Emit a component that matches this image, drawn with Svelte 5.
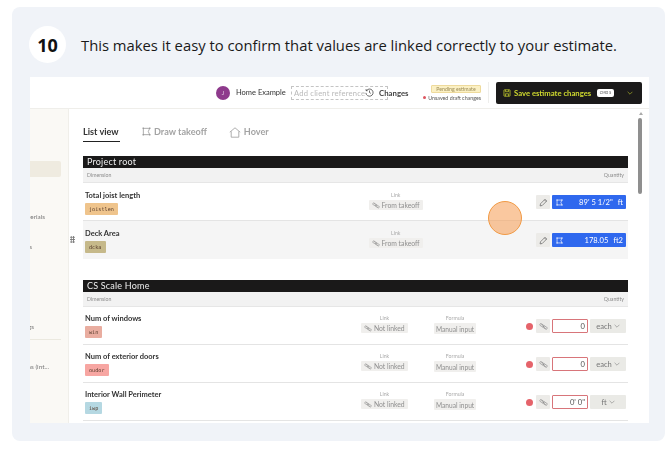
<script>
  const sideItems = [
    { text: 'Materials', cls: 'si1' },
    { text: 'Items', cls: 'si2' },
    { text: 'Settings', cls: 'si3' },
    { text: 'Extras (int...', cls: 'si4' }
  ];
  const rootRows = [
    { name: 'Total joist length', tag: 'joistlen', color: '#efc48c', value: '89\' 5 1/2"', unit: 'ft' },
    { name: 'Deck Area', tag: 'dcka', color: '#c6b98a', value: '178.05', unit: 'ft2', alt: true }
  ];
  const homeRows = [
    { name: 'Num of windows', tag: 'win', color: '#e9ada0', value: '0', unit: 'each' },
    { name: 'Num of exterior doors', tag: 'oudor', color: '#f7a6a2', value: '0', unit: 'each' },
    { name: 'Interior Wall Perimeter', tag: 'iwp', color: '#b5d8e2', value: '0\' 0"', unit: 'ft' }
  ];
</script>

{#snippet takeoffIcon(color)}
  <svg class="ico" viewBox="0 0 10 10" fill="none" stroke={color} stroke-width="0.9">
    <path d="M1.5 1.5h7L7 5l1.5 3.5h-7z" />
    <rect x="0.6" y="0.6" width="1.6" height="1.6" fill={color} stroke="none" />
    <rect x="7.8" y="0.6" width="1.6" height="1.6" fill={color} stroke="none" />
    <rect x="0.6" y="7.8" width="1.6" height="1.6" fill={color} stroke="none" />
    <rect x="7.8" y="7.8" width="1.6" height="1.6" fill={color} stroke="none" />
  </svg>
{/snippet}

{#snippet linkOff()}
  <svg class="ico" viewBox="0 0 12 10" fill="none" stroke="#8a8a8a" stroke-width="0.8">
    <rect x="0.8" y="2" width="6" height="2.8" rx="1.4" transform="rotate(30 3.8 3.4)" />
    <rect x="5.2" y="5" width="6" height="2.8" rx="1.4" transform="rotate(30 8.2 6.4)" />
    <path d="M3 1.4l6 7" />
  </svg>
{/snippet}

<div class="card">
  <header class="head">
    <div class="num">10</div>
    <p class="title">This makes it easy to confirm that values are linked correctly to your estimate.</p>
  </header>

  <div class="shot">
    <div class="topbar">
      <span class="avatar">J</span>
      <span class="project">Home Example</span>
      <span class="ref">Add client reference</span>
      <span class="changes">
        <svg class="clock" viewBox="0 0 10 10" fill="none" stroke="#333" stroke-width="0.8">
          <path d="M1.6 3A4 4 0 1 1 1 5.4M1.2 1.2V3h1.8M5 2.8V5l1.5 1" />
        </svg>
        Changes
      </span>
      <div class="status">
        <span class="pending">Pending estimate</span>
        <span class="unsaved"><i></i>Unsaved draft changes</span>
      </div>
      <span class="divider"></span>
      <div class="save">
        <svg class="saveicon" viewBox="0 0 10 10" fill="none" stroke="#cfd92f" stroke-width="0.9">
          <rect x="1.2" y="1" width="7.6" height="8" rx="0.6" />
          <path d="M3 1v2.4h4V1M3 9V6h4v3" />
        </svg>
        <span class="savetext">Save estimate changes</span>
        <span class="kbd">CMD S</span>
        <svg class="chev" viewBox="0 0 10 6" fill="none" stroke="#cfd92f" stroke-width="0.9">
          <path d="M1 1l4 4 4-4" />
        </svg>
      </div>
    </div>

    <div class="body">
      <aside class="side">
        <div class="hl"></div>
        {#each sideItems as s, i}
          {#if i === 3}<div class="rule"></div>{/if}
          <div class="sitem {s.cls}"><span>{s.text}</span></div>
        {/each}
      </aside>

      <main class="main">
        <nav class="tabs">
          <span class="tab active">List view</span>
          <span class="tab">
            {@render takeoffIcon('#9a9a9a')}
            Draw takeoff
          </span>
          <span class="tab">
            <svg class="ico home" viewBox="0 0 12 11" fill="none" stroke="#9a9a9a" stroke-width="0.8">
              <path d="M0.8 5.2L6 0.8l5.2 4.4M2.2 4.4v5.8h7.6V4.4" />
            </svg>
            Hover
          </span>
        </nav>

        <section class="sec">
          <h2 class="sechead">Project root</h2>
          <div class="dimrow"><span>Dimension</span><span>Quantity</span></div>
          {#each rootRows as r}
            <div class="row root" class:alt={r.alt}>
              <div class="namecol">
                <div class="name">{r.name}</div>
                <span class="tag" style="background:{r.color}">{r.tag}</span>
              </div>
              <div class="col">
                <span class="lbl">Link</span>
                <span class="chip">{@render linkOff()}From takeoff</span>
              </div>
              <div class="right">
                <span class="iconbtn">
                  <svg class="ico" viewBox="0 0 10 10" fill="none" stroke="#666" stroke-width="0.8">
                    <path d="M1.2 8.8l.5-2.4 5-5 1.9 1.9-5 5zM6 2.1l1.9 1.9" />
                  </svg>
                </span>
                <span class="blue">
                  {@render takeoffIcon('#fff')}
                  <span class="val">{r.value}</span>
                  <span class="unit">{r.unit}</span>
                </span>
              </div>
            </div>
          {/each}
        </section>

        <section class="sec second">
          <h2 class="sechead">CS Scale Home</h2>
          <div class="dimrow"><span>Dimension</span><span>Quantity</span></div>
          {#each homeRows as r}
            <div class="row home-row">
              <div class="namecol">
                <div class="name">{r.name}</div>
                <span class="tag" style="background:{r.color}">{r.tag}</span>
              </div>
              <div class="col">
                <span class="lbl">Link</span>
                <span class="chip">{@render linkOff()}Not linked</span>
              </div>
              <div class="col">
                <span class="lbl">Formula</span>
                <span class="chip tall">Manual input</span>
              </div>
              <div class="right">
                <i class="dot"></i>
                <span class="iconbtn">{@render linkOff()}</span>
                <span class="input">{r.value}</span>
                <span class="select">
                  {r.unit}
                  <svg class="minichev" viewBox="0 0 10 6" fill="none" stroke="#777" stroke-width="0.9">
                    <path d="M1 1l4 4 4-4" />
                  </svg>
                </span>
              </div>
            </div>
          {/each}
        </section>
      </main>

      <div class="track"><span class="arrow"></span><span class="thumb"></span></div>
    </div>

    <div class="grip"></div>
    <div class="pulse"></div>
  </div>
</div>

<style>
  :global(body) {
    margin: 0;
    background: #fff;
  }
  .card {
    width: 653px;
    height: 434px;
    margin: 7px 0 0 12px;
    padding: 19px 16px 18px 18px;
    box-sizing: border-box;
    background: #f0f3f8;
    border-radius: 8px;
    display: flex;
    flex-direction: column;
    font-family: "Open Sans", sans-serif;
  }
  .head {
    display: flex;
    align-items: center;
    gap: 15px;
    height: 37px;
    margin: 0 0 14px -1px;
  }
  .num {
    width: 37px;
    height: 37px;
    flex: none;
    border-radius: 50%;
    background: #fff;
    display: flex;
    align-items: center;
    justify-content: center;
    font-size: 18px;
    font-weight: 700;
    color: #111;
  }
  .title {
    margin: 1px 0 0;
    font-size: 14.8px;
    color: #1a1a1a;
    white-space: nowrap;
  }
  .shot {
    position: relative;
    width: 619px;
    height: 346px;
    background: #fff;
    overflow: hidden;
    display: flex;
    flex-direction: column;
    font-family: Lato, sans-serif;
    filter: blur(0.35px);
  }
  .topbar {
    height: 32px;
    flex: none;
    box-sizing: border-box;
    border-bottom: 1px solid #efeeea;
    display: flex;
    align-items: center;
    padding: 0 7px 0 186px;
    font-size: 7.5px;
    color: #333;
  }
  .avatar {
    width: 14px;
    height: 14px;
    flex: none;
    border-radius: 50%;
    background: #8e3a8c;
    color: #e8cfe6;
    font-size: 5.5px;
    display: flex;
    align-items: center;
    justify-content: center;
    margin-right: 6px;
  }
  .project {
    width: 55px;
    flex: none;
    white-space: nowrap;
  }
  .ref {
    width: 97px;
    height: 14px;
    flex: none;
    box-sizing: border-box;
    border: 1px dashed #c4c4c4;
    color: #b9b9b9;
    padding-left: 2px;
    line-height: 12px;
    font-size: 7.6px;
    letter-spacing: 0.2px;
    white-space: nowrap;
  }
  .changes {
    display: flex;
    align-items: center;
    gap: 5px;
    margin-left: -23px;
    width: 59px;
    flex: none;
    font-weight: 700;
    color: #444;
    font-size: 7.8px;
  }
  .clock {
    width: 9px;
    height: 9px;
  }
  .status {
    width: 57px;
    flex: none;
    display: flex;
    flex-direction: column;
    align-items: flex-end;
    gap: 2px;
    font-size: 5.3px;
  }
  .pending {
    width: 50px;
    height: 8px;
    box-sizing: border-box;
    background: #fbf0c4;
    border: 1px solid #eeda9c;
    border-radius: 1px;
    color: #9a8a55;
    text-align: center;
    line-height: 6px;
    font-size: 5.2px;
    white-space: nowrap;
  }
  .unsaved {
    display: flex;
    align-items: center;
    gap: 2px;
    color: #555;
    white-space: nowrap;
  }
  .unsaved i {
    width: 3px;
    height: 3px;
    border-radius: 50%;
    background: #dd5560;
  }
  .divider {
    width: 1px;
    height: 21px;
    background: #eeeeec;
    margin: 0 7px;
    flex: none;
  }
  .save {
    width: 146px;
    height: 22px;
    flex: none;
    box-sizing: border-box;
    background: #1b1a1a;
    border-radius: 2px;
    display: flex;
    align-items: center;
    padding: 0 8px 0 7px;
    color: #cfd92f;
  }
  .saveicon {
    width: 8px;
    height: 8px;
    margin-right: 3px;
  }
  .savetext {
    width: 83px;
    flex: none;
    font-size: 7.7px;
    font-weight: 700;
    white-space: nowrap;
  }
  .kbd {
    width: 17px;
    height: 8px;
    background: #fff;
    border-radius: 2px;
    color: #444;
    font-size: 3.6px;
    line-height: 8px;
    text-align: center;
    white-space: nowrap;
  }
  .chev {
    width: 6px;
    height: 4px;
    margin-left: auto;
    margin-right: 1px;
  }
  .body {
    flex: 1;
    min-height: 0;
    display: flex;
  }
  .side {
    width: 39px;
    flex: none;
    box-sizing: border-box;
    background: #faf9f5;
    border-right: 1px solid #f0efea;
    font-size: 6.4px;
    color: #777;
    padding-top: 52px;
  }
  .hl {
    width: 31px;
    height: 16px;
    background: #efebe0;
    border-radius: 0 2px 2px 0;
  }
  .sitem {
    display: flex;
    justify-content: flex-end;
    overflow: hidden;
    white-space: nowrap;
    height: 9px;
    line-height: 9px;
  }
  .si1 { margin-top: 35px; width: 15px; }
  .si2 { margin-top: 21px; width: 2px; }
  .si3 { margin-top: 71px; width: 4px; }
  .si4 { margin-top: 22px; width: 19px; }
  .rule {
    width: 31px;
    height: 1px;
    background: #ebe9df;
    margin-top: 8px;
  }
  .main {
    flex: 1;
    min-width: 0;
    padding-left: 14px;
  }
  .tabs {
    display: flex;
    gap: 22px;
    height: 33px;
    box-sizing: border-box;
    padding-top: 17px;
    font-size: 9.1px;
    font-weight: 700;
    color: #a3a3a3;
  }
  .tab {
    display: flex;
    align-items: flex-start;
    gap: 3px;
    height: 15px;
    line-height: 11px;
    white-space: nowrap;
  }
  .tab .ico {
    width: 9px;
    height: 9px;
    margin-top: 1px;
  }
  .tab .home {
    width: 12px;
    height: 11px;
  }
  .tab.active {
    color: #333;
    width: 37px;
    border-bottom: 1px solid #222;
    height: 15px;
    box-sizing: content-box;
  }
  .sec {
    width: 545px;
    margin-top: 14px;
  }
  .sec.second {
    margin-top: 21px;
  }
  .sechead {
    margin: 0;
    height: 12px;
    background: #1a1919;
    color: #eee;
    font-size: 9px;
    font-weight: 400;
    line-height: 12px;
    padding-left: 4px;
    letter-spacing: 0.2px;
  }
  .dimrow {
    height: 15px;
    box-sizing: border-box;
    background: #f2f2f2;
    border-bottom: 1px solid #e6e6e6;
    display: flex;
    justify-content: space-between;
    align-items: center;
    padding: 0 4px;
    font-size: 5.2px;
    color: #8c8c8c;
  }
  .row {
    height: 38px;
    box-sizing: border-box;
    border-bottom: 1px solid #e4e4e4;
    display: grid;
    align-items: start;
    padding: 7px 2px 0;
  }
  .row.root {
    grid-template-columns: 284px 52px 1fr;
    padding-top: 8px;
  }
  .row.root .right {
    margin-top: 4px;
  }
  .row.root.alt {
    background: #f5f5f5;
    border-bottom: none;
  }
  .row.home-row {
    grid-template-columns: 277px 72px 42px 1fr;
  }
  .namecol {
    display: flex;
    flex-direction: column;
    align-items: flex-start;
    gap: 2px;
  }
  .name {
    font-size: 7.5px;
    font-weight: 700;
    color: #333;
    line-height: 10px;
    white-space: nowrap;
  }
  .tag {
    height: 12px;
    padding: 0 4px;
    border-radius: 1px;
    font-family: "DejaVu Sans Mono", monospace;
    font-size: 5.2px;
    line-height: 12px;
    color: #553a2a;
  }
  .col {
    display: flex;
    flex-direction: column;
    align-items: center;
    width: fit-content;
    min-width: 42px;
    gap: 1px;
    padding-top: 1px;
  }
  .row.home-row .col:nth-child(2) {
    width: 45px;
  }
  .lbl {
    font-size: 5.2px;
    line-height: 7px;
    color: #aaa;
  }
  .chip {
    display: flex;
    align-items: center;
    justify-content: center;
    gap: 1.5px;
    height: 10px;
    padding: 0 3px;
    background: #f0efed;
    border-radius: 1px;
    font-size: 6.8px;
    color: #8f8f8f;
    white-space: nowrap;
  }
  .chip.tall {
    height: 11px;
    font-size: 6.6px;
    padding: 0 2px;
  }
  .chip .ico {
    width: 8px;
    height: 7px;
  }
  .right {
    justify-self: end;
    display: flex;
    align-items: center;
    gap: 2px;
    margin-top: 5px;
    height: 14px;
  }
  .iconbtn {
    width: 14px;
    height: 14px;
    background: #ecebe8;
    border-radius: 1px;
    display: flex;
    align-items: center;
    justify-content: center;
  }
  .iconbtn .ico {
    width: 9px;
    height: 9px;
  }
  .blue {
    width: 74px;
    height: 14px;
    box-sizing: border-box;
    background: #2f68ee;
    border-radius: 1px;
    display: flex;
    align-items: center;
    padding: 0 3px;
    color: #fff;
    font-size: 7.6px;
  }
  .blue .ico {
    width: 7px;
    height: 7px;
    margin-left: 1px;
  }
  .val {
    margin-left: auto;
    white-space: nowrap;
  }
  .unit {
    margin-left: 5px;
  }
  .dot {
    width: 7px;
    height: 7px;
    border-radius: 50%;
    background: #e5636a;
    margin-right: 1.5px;
  }
  .input {
    width: 36px;
    height: 14px;
    box-sizing: border-box;
    border: 1px solid #d8757a;
    border-radius: 1px;
    text-align: right;
    padding-right: 2px;
    font-size: 7.6px;
    line-height: 12px;
    color: #555;
  }
  .select {
    width: 36px;
    height: 14px;
    background: #eaeae6;
    border-radius: 1px;
    display: flex;
    align-items: center;
    justify-content: center;
    gap: 2px;
    font-size: 7.6px;
    color: #777;
  }
  .minichev {
    width: 6px;
    height: 4px;
  }
  .track {
    width: 21px;
    flex: none;
    position: relative;
  }
  .arrow {
    position: absolute;
    top: 3px;
    left: 11px;
    border: 2px solid transparent;
    border-bottom: 3px solid #aaa;
    border-top: 0;
  }
  .thumb {
    position: absolute;
    top: 9px;
    left: 10px;
    width: 4px;
    height: 76px;
    background: #8f8f8f;
    border-radius: 2px;
  }
  .grip {
    position: absolute;
    left: 40px;
    top: 159px;
    width: 5px;
    height: 7px;
    background-image: radial-gradient(#777 0.8px, transparent 0.9px);
    background-size: 2.4px 2.4px;
  }
  .pulse {
    position: absolute;
    left: 458px;
    top: 124px;
    width: 34px;
    height: 34px;
    box-sizing: border-box;
    border-radius: 50%;
    border: 1.5px solid #f19a45;
    background: rgba(245, 155, 80, 0.55);
  }
</style>
